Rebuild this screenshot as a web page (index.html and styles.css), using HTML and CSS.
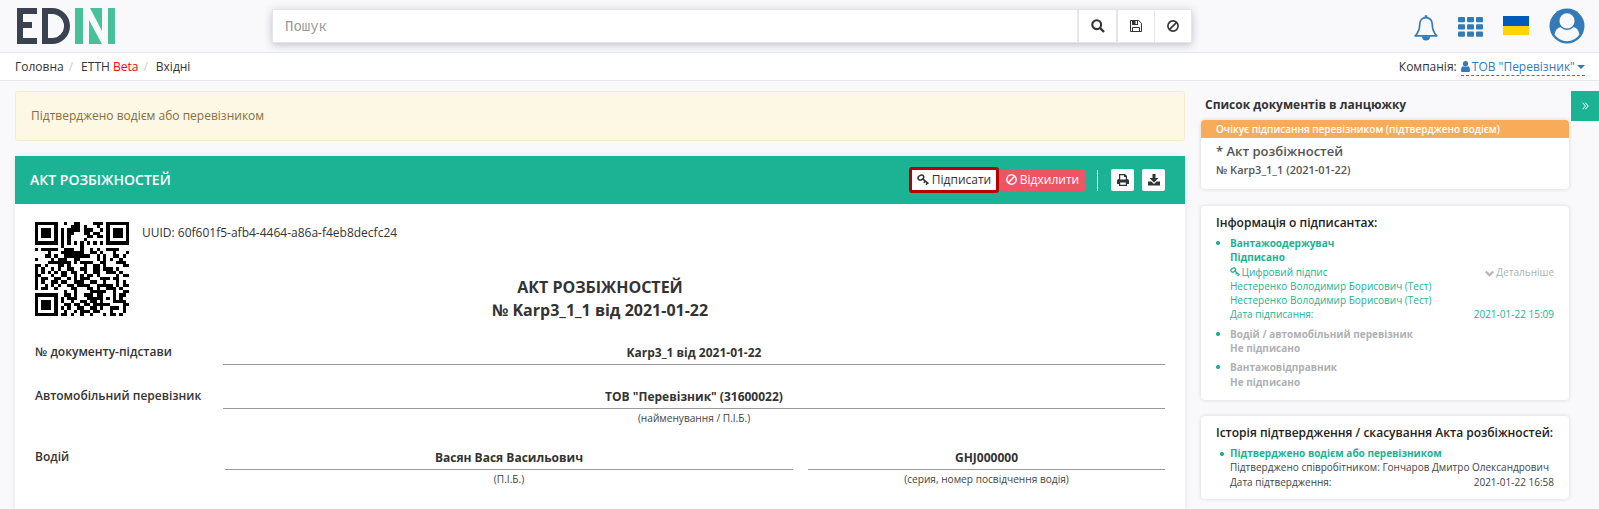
FILE: index.html
```html
<!DOCTYPE html>
<html lang="uk">
<head>
<meta charset="utf-8">
<title>EDIN</title>
<link rel="stylesheet" href="styles.css">
</head>
<body>
<svg class="defs" width="0" height="0">
  <symbol id="key" viewBox="0 0 12 12"><g fill="none" stroke="currentColor"><ellipse cx="3.9" cy="3.6" rx="3" ry="2.2" stroke-width="1.5" transform="rotate(-30 3.9 3.6)"/><path stroke-width="1.5" d="M5.6 4.8 11.5 9.6M8 7.2 6.8 8.9M10.3 8.7 9.1 10.8"/></g></symbol>
  <symbol id="ban" viewBox="0 0 12 12"><g fill="none" stroke="currentColor" stroke-width="1.6"><circle cx="6" cy="6" r="5.1"/><path d="M9.4 2.6 2.6 9.4"/></g></symbol>
</svg>
<header class="topbar">
  <svg class="logo" viewBox="0 0 98 36" width="98" height="36">
    <path fill="#3a4250" d="M0 0h20v6H6v8h9v6H6v10h14v6H0zM25 0h10a18 18 0 0 1 0 36H25zM31 6v24h4a12 12 0 0 0 0-24z" fill-rule="evenodd"/>
    <path fill="#47c199" d="M58 0h8v36h-8zM91 0h7v36h-7zM73 0h12v23zM72 12l13 24H72z"/>
  </svg>
  <div class="search">
    <input type="text" placeholder="Пошук">
    <button><svg width="14" height="14" viewBox="0 0 14 14"><circle cx="5.7" cy="5.7" r="4.4" fill="none" stroke="#333" stroke-width="2.1"/><path stroke="#333" stroke-width="2.4" d="m9 9 4 4"/></svg></button>
    <button><svg width="12" height="12" viewBox="0 0 12 12"><path fill="none" stroke="#333" d="M.5.5h8.3l2.7 2.7v8.3H.5zM2.5 11.500v-4h7v4"/><path fill="#333" d="M2 0h6v5H2z"/><path fill="#fff" d="M5.500 1h1.500v3h-1.500z"/></svg></button>
    <button><svg width="12" height="12"><use href="#ban"/></svg></button>
  </div>
  <nav class="tools">
    <svg class="bell" width="24" height="27" viewBox="0 0 24 27"><path fill="none" stroke="#337ab7" stroke-width="1.7" stroke-linejoin="round" d="M12 2.600c-4 0-6.300 3-6.300 7 0 6-1.700 8.600-4.500 11.200h21.600c-2.800-2.600-4.500-5.200-4.500-11.200 0-4-2.300-7-6.300-7z"/><path fill="#337ab7" d="M10.700.3h2.600V3h-2.600zM8 21.500h8a4 4 0 0 1-8 0z"/></svg>
    <svg class="grid" width="25" height="20" viewBox="0 0 25 20"><g fill="#337ab7"><rect width="7" height="5.300" rx="1"/><rect x="9" width="7" height="5.300" rx="1"/><rect x="18" width="7" height="5.300" rx="1"/><rect y="7.200" width="7" height="5.300" rx="1"/><rect x="9" y="7.200" width="7" height="5.300" rx="1"/><rect x="18" y="7.200" width="7" height="5.300" rx="1"/><rect y="14.500" width="7" height="5.300" rx="1"/><rect x="9" y="14.500" width="7" height="5.300" rx="1"/><rect x="18" y="14.500" width="7" height="5.300" rx="1"/></g></svg>
    <span class="flag"></span>
    <svg class="avatar" width="36" height="36" viewBox="0 0 36 36"><circle cx="18" cy="18" r="17.500" fill="#337ab7"/><path fill="#f9f9fb" d="M5.500 26.500C6.500 22 8.500 19.500 12 19h12c3.500.5 5.500 3 6.500 7.500A15.300 15.300 0 0 1 18 33.200 15.300 15.300 0 0 1 5.500 26.500z"/><circle cx="18" cy="12.900" r="8.300" fill="#f9f9fb" stroke="#337ab7" stroke-width="1.500"/></svg>
  </nav>
</header>
<div class="crumbs">
  <div class="path"><span>Головна</span><i>/</i><span>ЕТТН <b>Beta</b></span><i>/</i><span>Вхідні</span></div>
  <div class="company">Компанія: <a><svg width="9" height="11" viewBox="0 0 9 11"><path fill="#337ab7" d="M4.500 0a2.600 2.600 0 0 1 2.600 2.700c0 1.600-1 3-2.600 3s-2.600-1.400-2.600-3A2.600 2.600 0 0 1 4.500 0zM0 9.500C0 7 .8 5.200 2.300 5.200c1.300 1.200 3.100 1.200 4.400 0C8.200 5.200 9 7 9 9.500 9 10.500 8.500 11 7.500 11h-6C.5 11 0 10.500 0 9.500z"/></svg> ТОВ "Перевізник" <span class="caret"></span></a></div>
</div>
<div class="page">
  <main>
    <div class="alert">Підтверджено водієм або перевізником</div>
    <section class="doc">
      <div class="doc-head">
        <h1>АКТ РОЗБІЖНОСТЕЙ</h1>
        <button class="btn sign"><svg width="12" height="12"><use href="#key"/></svg><span>Підписати</span></button>
        <button class="btn reject"><svg width="11" height="11"><use href="#ban"/></svg><span>Відхилити</span></button>
        <span class="sep"></span>
        <button class="btn square"><svg width="12" height="12" viewBox="0 0 12 12"><path fill="#333" fill-rule="evenodd" d="M2 0h6l2 2v3c1.300 0 2 .7 2 2v3H10v2H2v-2H0V7c0-1.300.7-2 2-2zM3.200 1.200v4.300h5.600V3H7V1.200zM3.200 8.500v2.300h5.600V8.500z"/></svg></button>
        <button class="btn square"><svg width="12" height="12" viewBox="0 0 12 12"><path fill="#333" d="M4.500 0h3v4H10.500L6 8.500 1.500 4h3zM0 7.500h3.300L6 10l2.700-2.500H12V11.500H0z"/></svg></button>
      </div>
      <div class="doc-body">
        <div class="ident">
          <svg id="qr" width="94" height="94" viewBox="0 0 29 29" preserveAspectRatio="none" shape-rendering="crispEdges"></svg>
          <span>UUID: 60f601f5-afb4-4464-a86a-f4eb8decfc24</span>
        </div>
        <h2>АКТ РОЗБІЖНОСТЕЙ<br>№ Karp3_1_1 від 2021-01-22</h2>
        <div class="row first"><label>№ документу-підстави</label><div class="field"><strong>Karp3_1 від 2021-01-22</strong></div></div>
        <div class="row second"><label>Автомобільний перевізник</label><div class="field"><strong>ТОВ "Перевізник" (31600022)</strong><small>(найменування / П.І.Б.)</small></div></div>
        <div class="row third"><label>Водій</label><div class="field name"><strong>Васян Вася Васильович</strong><small>(П.І.Б.)</small></div><div class="field licence"><strong>GHJ000000</strong><small>(серия, номер посвідчення водія)</small></div></div>
      </div>
    </section>
  </main>
  <aside>
    <h3>Список документів в ланцюжку</h3>
    <div class="card chain">
      <div class="status">Очікує підписання перевізником (підтверджено водієм)</div>
      <p class="name">* Акт розбіжностей</p>
      <p class="num">№ Karp3_1_1 (2021-01-22)</p>
    </div>
    <div class="card signers">
      <h4>Інформація о підписантах:</h4>
      <div class="item signed">
        <p><b>Вантажоодержувач</b></p>
        <p><b>Підписано</b></p>
        <p class="split tall"><span><svg width="10" height="10"><use href="#key"/></svg> Цифровий підпис</span><span class="more"><svg width="9" height="7" viewBox="0 0 9 7"><path fill="none" stroke="#b3b5b8" stroke-width="2.200" d="m.8 1.500 3.700 3.700 3.700-3.700"/></svg> Детальніше</span></p>
        <p>Нестеренко Володимир Борисович (Тест)</p>
        <p>Нестеренко Володимир Борисович (Тест)</p>
        <p class="split"><span>Дата підписання:</span><span>2021-01-22 15:09</span></p>
      </div>
      <div class="item pending"><p><b>Водій / автомобільний перевізник</b></p><p><b>Не підписано</b></p></div>
      <div class="item pending last"><p><b>Вантажовідправник</b></p><p><b>Не підписано</b></p></div>
    </div>
    <div class="card history">
      <h4>Історія підтвердження / скасування Акта розбіжностей:</h4>
      <div class="item"><p class="ok"><b>Підтверджено водієм або перевізником</b></p><p>Підтверджено співробітником: Гончаров Дмитро Олександрович</p><p class="split date"><span>Дата підтвердження:</span><span>2021-01-22 16:58</span></p></div>
    </div>
  </aside>
  <button class="toggle"><svg width="7" height="8" viewBox="0 0 7 8"><path fill="none" stroke="#fff" d="m.5.700 3 3.300-3 3.300M3.300.700l3 3.300-3 3.300"/></svg></button>
</div>
<script src="qr.js"></script>
</body>
</html>
```
FILE: styles.css
```css
* { box-sizing: border-box; }
html, body { height: 100%; }
body { margin: 0; overflow: hidden; background: #f9f9fb; color: #333; font: 12px/18px "Open Sans", "Noto Sans", sans-serif; }
h1, h2, h3, h4, p { margin: 0; }
button, input { font: inherit; border: 0; padding: 0; margin: 0; }
svg { flex: none; }
.defs { display: block; height: 0; }
.topbar { height: 53px; border-bottom: 1px solid #e7eaec; display: flex; align-items: flex-start; padding: 8px 14px 0 17px; }
.search { display: flex; width: 920px; height: 34px; margin: 1px 0 0 157px; background: #e5e6e7; padding: 1px; gap: 1px; box-shadow: 0 2px 8px rgba(60, 70, 100, .3); }
.search input { flex: 1; min-width: 0; background: #fff; padding: 2px 12px 0; font: 14px "Liberation Mono", monospace; margin-right: 1px; }
.search input::placeholder { color: #999; opacity: 1; }
.search button { width: 36px; background: #fff; color: #333; display: flex; align-items: center; justify-content: center; }
.search input + button { width: 37px; margin-right: 1px; }
.tools { display: flex; margin-left: auto; align-items: flex-start; }
.bell { margin: 7px 20px 0 0; }
.grid { margin: 9px 20px 0 0; }
.flag { width: 26px; height: 19px; margin: 8px 20px 0 0; background: linear-gradient(#005bbb 10px, #ffd500 10px); }
.crumbs { height: 28px; background: #fff; border-bottom: 1px solid #e7eaec; display: flex; justify-content: space-between; padding: 5px 14px 0 15px; }
.path { display: flex; }
.path i { color: #ccc; font-style: normal; margin: 0 8px 0 5px; }
.path b { color: #f00; font-weight: 400; }
.company { display: flex; gap: 4px; }
.company a { color: #337ab7; height: 18px; border-bottom: 1px dashed #337ab7; }
.company svg { vertical-align: -1px; margin-right: -1px; }
.caret { display: inline-block; border: 4px solid transparent; border-top-color: #337ab7; border-bottom: 0; vertical-align: 2px; margin-left: -1px; }
.page { display: flex; align-items: flex-start; padding: 10px 0 0 15px; }
main { width: 1170px; flex: none; }
.alert { height: 50px; padding: 15px 15px; border: 1px solid #faebcc; border-radius: 3px; background: #fcf8e3; color: #8a6d3b; }
.doc { margin-top: 15px; height: 370px; background: #fff; box-shadow: 0 0 6px rgba(0, 0, 0, .08); }
.doc-head { height: 48px; background: #1bb394; display: flex; align-items: center; padding: 0 20px 0 15px; }
.doc-head h1 { color: #fff; font-size: 14px; font-weight: 600; margin-right: auto; }
.btn { display: flex; align-items: center; justify-content: center; gap: 3px; height: 22px; margin-bottom: 1px; border-radius: 2px; background: #fff; color: #333; line-height: 18px; }
.btn span { padding-top: 1px; }
.sign { width: 90px; height: 26px; border: 3px solid #b80000; border-radius: 3px; }
.reject { width: 85px; background: #ed5565; color: #fff; margin-left: 1px; }
.sep { width: 1px; height: 21px; background: #fff; margin: 0 13px 0 12px; }
.square { width: 23px; }
.square + .square { margin-left: 8px; }
.doc-body { padding: 18px 20px 0; }
.ident { display: flex; gap: 13px; height: 49px; }
.ident span { padding-top: 2px; }
.doc-body h2 { font-size: 16px; line-height: 23px; text-align: center; height: 72px; padding-top: 5px; }
.row { display: flex; justify-content: space-between; }
.row label { width: 188px; flex: none; font-weight: 600; }
.field { flex: 1; text-align: center; }
.field strong { display: block; height: 22px; padding-top: 1px; border-bottom: 1px solid #999; }
.field small { display: block; font-size: 10.15px; line-height: 19px; color: #444; }
.first { height: 44px; }
.second { height: 61px; }
.third label { width: 190px; }
.third .name { flex: none; width: 568px; margin-right: 15px; }
aside { width: 368px; margin-left: 16px; flex: none; }
aside h3 { font-size: 12px; line-height: 18px; padding: 5px 4px 0; height: 29px; }
.card { background: #fff; border-radius: 4px; box-shadow: 0 0 4px rgba(0, 0, 0, .14); padding: 0 15px; overflow: hidden; font-size: 10px; line-height: 14px; }
.chain { height: 69px; font-weight: 600; color: #555; }
.status { height: 18px; line-height: 18px; margin: 0 -15px; padding: 0 15px; background: #f8ac59; color: #fff; }
.chain .name { font-size: 13px; line-height: 18px; padding-top: 4px; }
.chain .num { font-size: 11px; line-height: 16px; padding-top: 2px; }
.signers { height: 194px; margin-top: 17px; }
.history { height: 83px; margin-top: 16px; }
.card h4 { font-size: 12px; font-weight: 600; line-height: 18px; padding-top: 8px; color: #222; }
.item { padding-left: 14px; background: radial-gradient(circle at 2px 2px, #1bb394 1.8px, transparent 2.3px) 0 5px / 5px 5px no-repeat; }
.signed { color: #1bb394; margin-top: 4px; height: 91px; }
.pending { color: #aeb1b4; height: 33px; }
.last p + p { padding-top: 1px; }
.split { display: flex; justify-content: space-between; }
.signed .tall { height: 15px; padding-top: 1px; }
.tall svg { vertical-align: -1px; margin-right: -1px; }
.tall .more svg { margin-right: 0; }
.more { color: #aeb1b4; }
.history .item { background-position: 4px 6px; margin-top: 4px; color: #444; }
.ok { color: #1bb394; }
.date { padding-top: 1px; }
.toggle { width: 28px; height: 30px; margin-left: auto; background: #1bb394; display: flex; align-items: center; justify-content: center; }
```
FILE: qr.js
```javascript
const rows = [
  "11111110010011000011101111111",
  "10000010000111010001001000001",
  "10111010101111011100101011101",
  "10111010101100011011001011101",
  "10111010101000001101101011101",
  "10000010101000010000001000001",
  "11111110101010101010101111111",
  "00000000100000100000000000000",
  "10111110011100100101001111000",
  "00001000111111100110100010001",
  "00011010011111111001010011010",
  "10000101110011000001010100100",
  "00001111111010111100110001110",
  "11010001101000010011010000011",
  "10100101001100110011011101000",
  "10101010110110010011001110100",
  "11000100110010101101000001011",
  "10110011001010111000111011000",
  "10100110110011100110010001010",
  "10010101001101111001111101011",
  "10110010000110001101001110100",
  "00000000010010000111110010011",
  "11111110011010011101100010110",
  "10000010101110001111101010100",
  "10111010100100110110100011110",
  "10111010011011011011111000011",
  "10111010101001100110100111010",
  "10000010010010111011000100010",
  "11111110110100100100010110100"
];
const path = document.createElementNS("http://www.w3.org/2000/svg", "path");
path.setAttribute("d", rows.map((row, y) => [...row].map((c, x) => c === "1" ? `M${x} ${y}h1v1h-1z` : "").join("")).join(""));
document.getElementById("qr").append(path);
```
